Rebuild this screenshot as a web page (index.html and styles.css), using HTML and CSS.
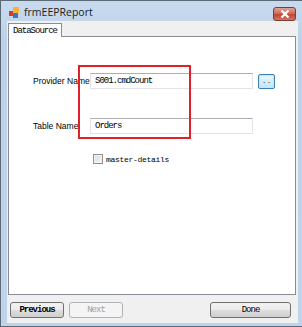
FILE: index.html
```html
<!DOCTYPE html>
<html lang="en">
<head>
    <meta charset="UTF-8">
    <title>frmEEPReport</title>
    <link rel="stylesheet" href="styles.css">
</head>
<body>
    <div class="window">
        <div class="titlebar">
            <svg class="app-icon" width="10" height="11" viewBox="0 0 10 11">
                <rect x="0" y="4" width="5" height="5" fill="#d83a2a"/>
                <rect x="4" y="0" width="6" height="6" fill="#f2b431"/>
                <rect x="4" y="6" width="5" height="5" fill="#3a78c8"/>
            </svg>
            <span class="title">frmEEPReport</span>
            <div class="close-btn">
                <svg width="10" height="8" viewBox="0 0 10 8">
                    <path d="M1.5 0.5 L8.5 7.5 M8.5 0.5 L1.5 7.5" stroke="#fff" stroke-width="2.2"/>
                </svg>
            </div>
        </div>

        <div class="client">
            <div class="tabs">
                <div class="tab active">DataSource</div>
            </div>

            <div class="tabpage">
                <div class="form-row first">
                    <label class="field-label">Provider Name</label>
                    <div class="textbox">S001.cmdCount</div>
                    <div class="browse-btn">..</div>
                </div>
                <div class="form-row second">
                    <label class="field-label">Table Name</label>
                    <div class="textbox">Orders</div>
                </div>
                <div class="check-row">
                    <span class="checkbox"></span>
                    <span class="check-text">master-details</span>
                </div>

                <div class="highlight"></div>
            </div>

            <div class="footer">
                <button class="btn bold">Previous</button>
                <button class="btn" disabled>Next</button>
                <span class="spacer"></span>
                <button class="btn wide">Done</button>
            </div>
        </div>
    </div>
</body>
</html>
```

FILE: styles.css
```css
body { margin: 0; background: #fff; }

.window {
    width: 302px;
    height: 327px;
    box-sizing: border-box;
    border: 1px solid #5b6876;
    border-right: none;
    background: linear-gradient(#c8daee, #bcd2ea 40px, #bed4ec);
    display: flex;
    flex-direction: column;
}

.titlebar {
    height: 20px;
    display: flex;
    align-items: center;
    padding-left: 8px;
    position: relative;
}
.app-icon { margin-top: 2px; }
.title {
    margin-left: 5px;
    margin-top: 1px;
    font-family: "Open Sans", sans-serif;
    font-size: 10.5px;
    color: #1e1e1e;
}
.close-btn {
    position: absolute;
    right: 6px;
    top: 6px;
    width: 21px;
    height: 12px;
    border: 1px solid #7d3a3a;
    border-radius: 3px;
    background: linear-gradient(#e3a396, #cf6b5c 45%, #c24633 55%, #d1765e);
    display: flex;
    align-items: center;
    justify-content: center;
}

.client {
    flex: 1;
    margin: 0 4px 3px 6px;
    background: #f0f0f0;
    display: flex;
    flex-direction: column;
}

.tabs {
    height: 15px;
    display: flex;
    align-items: flex-end;
    padding-left: 1px;
}
.tab {
    height: 14px;
    box-sizing: border-box;
    padding: 2px 0 0 4px;
    width: 54px;
    border: 1px solid #898c95;
    border-bottom: none;
    background: #fff;
    font-family: "Liberation Mono", monospace;
    font-size: 9px;
    letter-spacing: -1px;
    color: #000;
    margin-bottom: -1px;
    position: relative;
    z-index: 1;
}

.tabpage {
    height: 259px;
    box-sizing: border-box;
    margin: 0 2px 0 1px;
    border: 1px solid #898c95;
    background: #fff;
    position: relative;
    padding: 36px 0 0 24px;
}

.form-row {
    display: flex;
    align-items: center;
    height: 16px;
}
.form-row.second { margin-top: 29px; }
.field-label {
    width: 57px;
    font-family: "Liberation Sans", Arial, sans-serif;
    font-size: 8.5px;
    color: #000;
    white-space: nowrap;
}
.textbox {
    width: 163px;
    height: 16px;
    box-sizing: border-box;
    border: 1px solid #e2e3ea;
    border-top-color: #abadb3;
    padding: 2px 0 0 4px;
    font-family: "Liberation Mono", monospace;
    font-size: 9px;
    letter-spacing: -1px;
    color: #000;
}
.browse-btn {
    width: 17px;
    height: 15px;
    box-sizing: border-box;
    margin-left: 5px;
    border: 1px solid #3c7fb1;
    border-radius: 2px;
    background: linear-gradient(#eaf6fd, #bee6fd);
    box-shadow: inset 0 0 0 1px #c8e6f8;
    font-family: "Liberation Mono", monospace;
    font-size: 8px;
    line-height: 11px;
    text-align: center;
    color: #444;
}

.check-row {
    display: flex;
    align-items: center;
    margin: 20px 0 0 60px;
}
.checkbox {
    width: 10px;
    height: 10px;
    box-sizing: border-box;
    border: 1px solid #8f8f8f;
    background: linear-gradient(135deg, #dcdcdc, #f6f6f6);
    box-shadow: inset 0 0 0 1px #f4f4f4;
}
.check-text {
    margin-left: 3px;
    font-family: "Liberation Mono", monospace;
    font-size: 8px;
    letter-spacing: -0.3px;
    color: #000;
}

.highlight {
    position: absolute;
    left: 69px;
    top: 28px;
    width: 113px;
    height: 74px;
    box-sizing: border-box;
    border: 2px solid #e0202a;
}

.footer {
    flex: 1;
    display: flex;
    align-items: flex-start;
    padding: 7px 7px 0 3px;
}
.spacer { flex: 1; }
.btn {
    width: 54px;
    height: 16px;
    padding: 0;
    margin-right: 5px;
    box-sizing: border-box;
    border: 1px solid #707070;
    border-radius: 3px;
    background: linear-gradient(#f2f2f2, #ebebeb 50%, #dddddd 51%, #cfcfcf);
    font-family: "Liberation Mono", monospace;
    font-size: 9px;
    letter-spacing: -1px;
    color: #000;
}
.btn.bold { font-weight: bold; }
.btn.wide { width: 81px; margin-right: 0; }
.btn:disabled {
    border-color: #adb2b5;
    background: #f4f4f4;
    color: #a0a0a0;
}
```
